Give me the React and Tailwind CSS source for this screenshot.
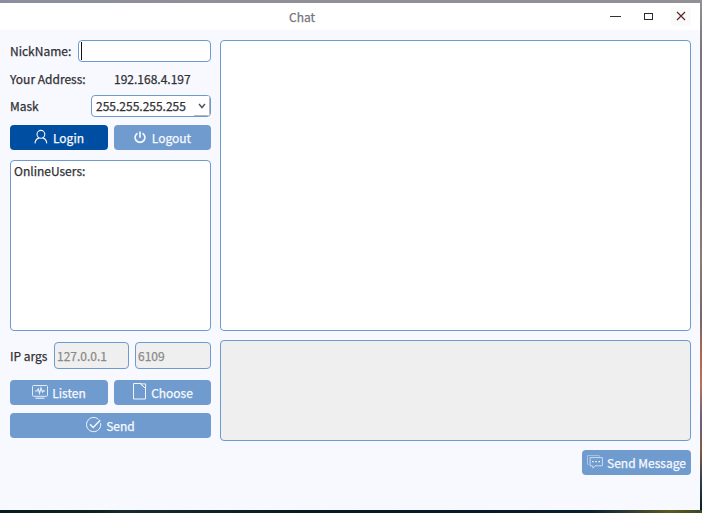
import React from 'react';

const Button = ({ className = '', children }) => (
  <button
    className={`flex h-[25px] items-center justify-center rounded-[4px] text-[#f8f9ff] ${className}`}
  >
    {children}
  </button>
);

const Label = ({ className = 'pt-px', children }) => (
  <span className={`whitespace-pre leading-[20px] ${className}`}>{children}</span>
);

const UserIcon = () => (
  <svg width="14" height="16" viewBox="0 0 14 16" fill="none" stroke="#f3f6fd" strokeWidth="1.1" className="-mt-[2px]">
    <circle cx="6.9" cy="5.3" r="3.9" />
    <path d="M1 14.4c.3-3.2 2-4.9 4.2-5.5M12.8 14.4c-.3-3.2-2-4.9-4.2-5.5" />
  </svg>
);

const PowerIcon = () => (
  <svg width="12" height="13" viewBox="0 0 12 13" fill="none" stroke="#f3f6fd" strokeWidth="1.7" className="-mt-px">
    <path d="M3.5 2.2a4.9 4.9 0 1 0 5 0M6 .5v6.2" />
  </svg>
);

const MonitorIcon = () => (
  <svg width="16" height="14" viewBox="0 0 16 14" fill="none" stroke="#e4ecf8" className="-mt-[2px]">
    <rect x=".5" y=".5" width="15" height="10.8" rx="1" strokeWidth="1" />
    <path d="M3 6h2l1.2-2 1.3 4.2L9 3l1.4 4 .9-1.2H13" strokeWidth="1.2" />
    <path d="M3.5 13.2h9" strokeWidth="1.2" />
  </svg>
);

const FileIcon = () => (
  <svg width="15" height="17" viewBox="0 0 15 17" fill="none" stroke="#f0f5fc" strokeWidth="1" className="-mt-[2px]">
    <path d="M9 .5H1.5v15.5h12V5" />
    <path d="M8.6.9h5v4.6zM8.6.9l5 4.6" strokeWidth="1" />
  </svg>
);

const CheckIcon = () => (
  <svg width="16" height="16" viewBox="0 0 16 16" fill="none" stroke="#f3f6fd" className="-mt-[2px]">
    <path d="M14.6 6.2A7.1 7.1 0 1 1 12.6 2.5" strokeWidth="1" />
    <path d="M4 7.2l3.2 3.3 7-7.2" strokeWidth="1.5" />
  </svg>
);

const MessageIcon = () => (
  <svg width="16" height="14" viewBox="0 0 16 14" fill="none" stroke="#c9dcf1" strokeWidth="1" className="-mt-[2px]">
    <path d="M1.8 9.3H.5V.6h11.8v1.2" opacity=".65" />
    <path d="M3.1 2.6h12.3v8.2H8l-2 2.4-.6-2.4H3.1z" />
    <path d="M5.2 6.7h1.4M8.4 6.7h1.4M11.6 6.7H13" stroke="#fff" strokeWidth="1.3" />
  </svg>
);

const TitleBar = () => (
  <header className="flex h-[27px] items-center bg-white">
    <h1 className="ml-[289px] w-[30px] text-[12px] leading-[20px] text-[#75727c]">Chat</h1>
    <div className="ml-auto mr-[9px] flex h-[19px] items-center">
      <svg width="12" height="12" className="mr-[21px]" shapeRendering="crispEdges">
        <path d="M1 5.5h11" stroke="#333" />
      </svg>
      <svg width="12" height="12" className="mr-[17px]" shapeRendering="crispEdges">
        <rect x="2.5" y="2.5" width="8" height="6" fill="none" stroke="#2b2b2f" />
      </svg>
      <span className="flex h-[19px] w-[20px] items-center justify-center rounded-[2px] bg-[#fafafa]">
        <svg width="10" height="10" viewBox="0 0 10 10" className="-mt-px mr-px">
          <path d="M1 1l8 8M9 1L1 9" stroke="#62242a" strokeWidth="1.2" />
        </svg>
      </span>
    </div>
  </header>
);

export default function App() {
  return (
    <div className="flex h-[513px] w-[702px] flex-col overflow-hidden bg-[linear-gradient(to_bottom,#929198_0,#77767b_50px,#77767b_180px,#887d77_260px,#75666c_320px,#a9674f_350px,#b7725d_385px,#67617a_420px,#835b48_450px,#263b50_485px,#071c23_510px,#071c23_513px)] font-['Noto_Sans_CJK_SC','Noto_Sans',sans-serif] text-[12px] font-normal text-[#303034] [-webkit-text-stroke:0.25px_currentColor]">
      <div className="h-[3px] shrink-0 bg-gradient-to-r from-[#8c8e9f] via-[#929096] to-[#929096]" />
      <main className="flex h-[507px] w-[700px] shrink-0 flex-col bg-[#f8f9ff]">
        <TitleBar />
        <div className="flex gap-[9px] pl-[10px] pt-[10px]">
          <section className="flex w-[201px] flex-col">
            <div className="flex h-[22px] items-center justify-between">
              <Label className="">NickName:</Label>
              <div className="flex h-[22px] w-[133px] items-center rounded-[4px] border border-[#6d9bcf] bg-white pl-[2px]">
                <span className="h-[18px] w-px bg-[#111]" />
              </div>
            </div>
            <div className="mt-[7px] flex h-[20px] items-center">
              <Label className="w-[104px]">Your Address:</Label>
              <Label className="">192.168.4.197</Label>
            </div>
            <div className="mt-[6px] flex h-[22px] items-center justify-between">
              <Label className="">Mask</Label>
              <div className="flex h-[22px] w-[120px] items-center justify-between overflow-hidden rounded-[4px] border border-[#6d9bcf] bg-white pl-[4px]">
                <Label className="">255.255.255.255</Label>
                <span className="flex h-[20px] w-[16px] items-center justify-center border-b border-r border-[#b5b5b5] bg-white">
                  <svg width="8" height="6" fill="none" stroke="#545464" strokeWidth="1.5">
                    <path d="M1 1l3 3.5L7 1" />
                  </svg>
                </span>
              </div>
            </div>
            <div className="mt-[8px] flex gap-[6px]">
              <Button className="w-[98px] gap-[5px] bg-[#004ea1]"><UserIcon /><Label>Login</Label></Button>
              <Button className="w-[97px] gap-[6px] bg-[#6f9bce]"><PowerIcon /><Label>Logout</Label></Button>
            </div>
            <div className="mt-[10px] h-[171px] rounded-[4px] border border-[#6d9bcf] bg-white pl-[3px]">
              <Label className="block">OnlineUsers:</Label>
            </div>
            <div className="mt-[11px] flex h-[27px] items-center">
              <Label className="w-[44px] pt-px">IP args</Label>
              <div className="flex h-[27px] w-[75px] items-center rounded-[4px] border border-[#6d9bcf] bg-[#efefef] pl-[2px] text-[#8a8a8a]"><Label>127.0.0.1</Label></div>
              <div className="ml-[6px] flex h-[27px] w-[76px] items-center rounded-[4px] border border-[#6d9bcf] bg-[#efefef] pl-[2px] text-[#8a8a8a]"><Label>6109</Label></div>
            </div>
            <div className="mt-[11px] flex gap-[6px]">
              <Button className="w-[98px] gap-[4px] bg-[#6f9bce]"><MonitorIcon /><Label>Listen</Label></Button>
              <Button className="w-[97px] gap-[4px] bg-[#6f9bce]"><FileIcon /><Label>Choose</Label></Button>
            </div>
            <Button className="mt-[8px] w-[201px] gap-[4px] bg-[#6f9bce]"><CheckIcon /><Label>Send</Label></Button>
          </section>
          <section className="flex w-[471px] flex-col">
            <div className="h-[291px] rounded-[4px] border border-[#6d9bcf] bg-white" />
            <div className="mt-[9px] h-[101px] rounded-[4px] border border-[#6d9bcf] bg-[#efefef]" />
            <Button className="ml-auto mt-[9px] w-[109px] gap-[4px] bg-[#6f9bce]"><MessageIcon /><Label>Send Message</Label></Button>
          </section>
        </div>
      </main>
      <div className="h-[3px] shrink-0 bg-[linear-gradient(to_right,#061b1f_0,#10221f_100px,#1a2930_125px,#061b20_300px,#08172a_470px,#081f31_590px,#2f3e31_630px,#5b5b1d_670px,#3d4729_702px)]" />
    </div>
  );
}
